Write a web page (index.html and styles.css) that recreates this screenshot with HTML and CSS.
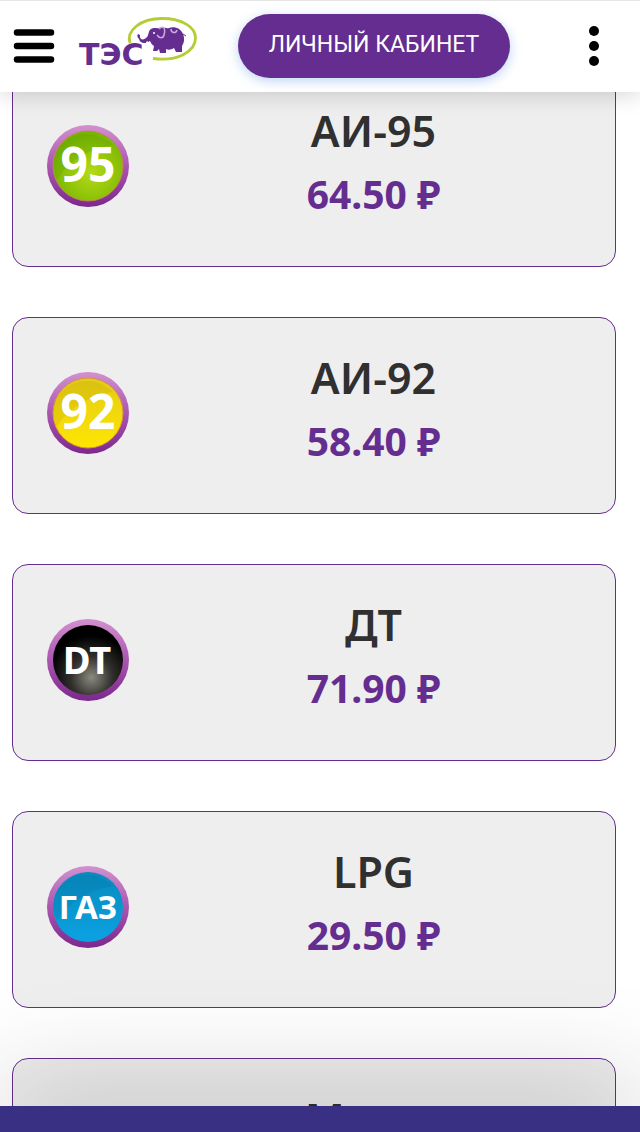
FILE: index.html
```
<!DOCTYPE html>
<html lang="ru">
<head>
<meta charset="UTF-8">
<meta name="viewport" content="width=device-width, initial-scale=1">
<title>ТЭС</title>
<link rel="stylesheet" href="styles.css">
</head>
<body>
<header class="header">
	<button type="button" class="btn_menu" aria-label="Меню">
		<svg width="40" height="34" viewBox="0 0 40 34"><path d="M3 3.500H37M3 17H37M3 30.500H37" stroke="#000" stroke-width="6.500" stroke-linecap="round"/></svg>
	</button>
	<a href="#" class="logo" aria-label="ТЭС">
		<svg width="118" height="60" viewBox="0 0 118 60">
			<path d="M50 27C46 15 60 2.500 82 2.500C102 2.500 115.500 11 115.500 22C115.500 35 98 46 73 42.500" fill="none" stroke="#b5cc34" stroke-width="2.800"/>
			<text class="logo_text" x="-1" y="49">ТЭС</text>
			<path d="M58 18L60 19C59 24 64 25 67 21C69 19 68 15 71 13C74 11 77 13 79 12C82 10 86 13 89 12C95 10 101 13 103 18C105 23 104 27 102 30L102 36H96L94 32C91 34 88 34 86 33L86 37H80L79 33L77 35H73L74 30C72 29 71 27 70 25C66 28 60 28 59 23C57 21 57 19 58 18Z" fill="#652d90"/>
			<path d="M103 18L106 20" stroke="#652d90"/>
			<path d="M67 25L64 30L71 28Z" fill="#fff"/>
			<path d="M79 13C83 9 86 12 84 19C83 23 79 22 77 19M91 13C91 17 96 18 97 14" fill="none" stroke="#c9addb" stroke-width="1.500"/>
			<circle cx="74" cy="17" r="1" fill="#fff"/>
		</svg>
	</a>
	<button type="button" class="btn_account">ЛИЧНЫЙ КАБИНЕТ</button>
	<button type="button" class="btn_more" aria-label="Ещё">
		<svg width="10" height="40" viewBox="0 0 10 40"><circle cx="5" cy="5" r="5"/><circle cx="5" cy="20" r="5"/><circle cx="5" cy="35" r="5"/></svg>
	</button>
</header>

<!-- shared gradients for the fuel badges -->
<svg class="defs" width="0" height="0" aria-hidden="true">
	<defs>
		<linearGradient id="ring" x1="0" y1="0" x2="0" y2="1"><stop offset="0" stop-color="#d391cf"/><stop offset=".5" stop-color="#aa56b0"/><stop offset="1" stop-color="#7c278c"/></linearGradient>
		<radialGradient id="green" cx=".55" cy=".6" r=".6"><stop offset="0" stop-color="#b4da16"/><stop offset="1" stop-color="#76b400"/></radialGradient>
		<linearGradient id="yellow" x1="0" y1="0" x2="0" y2="1"><stop offset="0" stop-color="#e2cc18"/><stop offset="1" stop-color="#ffe500"/></linearGradient>
		<radialGradient id="black" cx=".55" cy=".75" r=".6"><stop offset="0" stop-color="#8a8a80"/><stop offset=".5" stop-color="#302f2c"/><stop offset="1" stop-color="#000"/></radialGradient>
		<linearGradient id="blue" x1="0" y1="0" x2="0" y2="1"><stop offset="0" stop-color="#078bbd"/><stop offset="1" stop-color="#0ba2e2"/></linearGradient>
	</defs>
</svg>

<main class="prices">
	<section class="card">
		<svg class="badge" viewBox="0 0 82 82">
			<circle cx="41" cy="41" r="41" fill="url(#ring)"/>
			<circle cx="41" cy="41" r="35" fill="url(#green)" stroke="#c08a4a"/>
			<path d="M10 55C20 38 40 24 66 20C55 8 30 3 14 20C5 30 5 43 10 55Z" fill="#3f8a00" opacity=".18"/>
			<text class="badge_num" x="41" y="57">95</text>
		</svg>
		<div class="info">
			<h2 class="name">АИ-95</h2>
			<p class="price">64.50 ₽</p>
		</div>
	</section>
	<section class="card">
		<svg class="badge" viewBox="0 0 82 82">
			<circle cx="41" cy="41" r="41" fill="url(#ring)"/>
			<circle cx="41" cy="41" r="35" fill="url(#yellow)" stroke="#d9953a"/>
			<path d="M10 55C20 38 40 24 66 20C55 8 30 3 14 20C5 30 5 43 10 55Z" fill="#b09000" opacity=".18"/>
			<text class="badge_num" x="41" y="57">92</text>
		</svg>
		<div class="info">
			<h2 class="name">АИ-92</h2>
			<p class="price">58.40 ₽</p>
		</div>
	</section>
	<section class="card">
		<svg class="badge" viewBox="0 0 82 82">
			<circle cx="41" cy="41" r="41" fill="url(#ring)"/>
			<circle cx="41" cy="41" r="35" fill="url(#black)"/>
			<text class="badge_dt" x="40" y="55">DT</text>
		</svg>
		<div class="info">
			<h2 class="name">ДТ</h2>
			<p class="price">71.90 ₽</p>
		</div>
	</section>
	<section class="card">
		<svg class="badge" viewBox="0 0 82 82">
			<circle cx="41" cy="41" r="41" fill="url(#ring)"/>
			<circle cx="41" cy="41" r="35" fill="url(#blue)"/>
			<path d="M10 55C20 38 40 24 66 20C55 8 30 3 14 20C5 30 5 43 10 55Z" fill="#045e8c" opacity=".15"/>
			<text class="badge_gas" x="41" y="53">ГАЗ</text>
		</svg>
		<div class="info">
			<h2 class="name">LPG</h2>
			<p class="price">29.50 ₽</p>
		</div>
	</section>
	<section class="card">
		<div class="badge"></div>
		<div class="info">
			<h2 class="name">Метан</h2>
		</div>
	</section>
</main>

<footer class="bottom_bar"></footer>
</body>
</html>
```

FILE: styles.css
```
* {
	box-sizing: border-box;
}
html, body {
	height: 100%;
	margin: 0;
	padding: 0;
}
body {
	display: flex;
	flex-direction: column;
	overflow: hidden;
	background-color: #fff;
	font-family: "Noto Sans", "Open Sans", sans-serif;
}
button {
	margin: 0;
	padding: 0;
	border: none;
	background: none;
	cursor: pointer;
}
svg {
	display: block;
	overflow: visible;
}
.defs {
	position: absolute;
}

/* header */
.header {
	position: relative;
	z-index: 2;
	flex: none;
	display: flex;
	align-items: center;
	height: 92px;
	padding: 0 41px 2px 14px;
	border-top: 1px solid #e6e6e6;
	background-color: #fff;
	box-shadow: 0 4px 20px rgba(0, 0, 0, 0.15);
}
.logo {
	margin: 0 40px 0 26px;
}
.logo_text {
	font: bold 30px "DejaVu Sans", sans-serif;
	fill: #652d90;
}
.btn_account {
	width: 272px;
	height: 64px;
	padding-bottom: 2px;
	border-radius: 32px;
	background-color: #652d90;
	box-shadow: 0 3px 12px rgba(90, 150, 230, 0.4);
	color: #fff;
	font: 400 23px Roboto, sans-serif;
}
.btn_more {
	margin-left: auto;
}

/* fuel prices */
.prices {
	flex: 1;
	min-height: 0;
	display: flex;
	flex-direction: column;
	gap: 50px;
	margin-top: -22px;
	padding: 0 24px 0 12px;
	overflow: hidden;
}
.card {
	flex: none;
	display: flex;
	gap: 17px;
	height: 197px;
	padding: 0 14px 0 34px;
	border: 1px solid #652d90;
	border-radius: 16px;
	background-color: #eee;
}
.badge {
	flex: none;
	width: 82px;
	height: 82px;
	margin-top: 54px;
}
.badge text {
	fill: #fff;
	font-weight: bold;
	text-anchor: middle;
}
.badge_num {
	font-size: 48px;
}
.badge_dt {
	font-size: 38px;
}
.badge_gas {
	font-size: 33px;
}
.info {
	flex: 1;
	padding-top: 30px;
	text-align: center;
}
.name, .price {
	margin: 0;
}
.name {
	color: #303030;
	font-size: 43px;
	font-weight: 600;
	line-height: 60px;
}
.price {
	color: #652d90;
	font-size: 39px;
	font-weight: 700;
	line-height: 66px;
}

.bottom_bar {
	position: relative;
	z-index: 1;
	flex: none;
	height: 26px;
	background-color: #3a3083;
	box-shadow: 0 0 110px 4px rgba(0, 0, 0, 0.4);
}
```
